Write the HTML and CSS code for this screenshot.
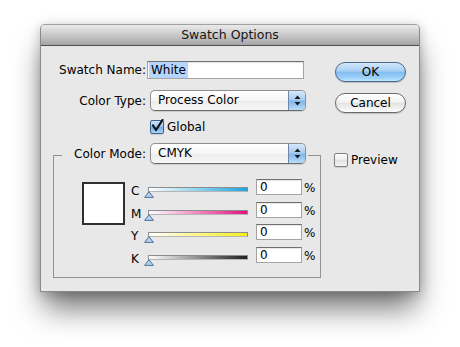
FILE: index.html
```html
<!DOCTYPE html>
<html>
<head>
<meta charset="utf-8">
<link rel="stylesheet" href="styles.css">
</head>
<body>
<div class="stage">
  <div class="win">
    <div class="titlebar">Swatch Options</div>
    <div class="content">
      <div class="main">
        <div class="row r-name">
          <span class="lbl">Swatch Name:</span>
          <div class="textfield"><span class="sel">White</span></div>
        </div>
        <div class="row r-type">
          <span class="lbl">Color Type:</span>
          <div class="popup">
            <span class="val">Process Color</span>
            <span class="arr"><svg width="7" height="11" viewBox="0 0 7 11"><polygon points="3.5,0.5 6.5,4 0.5,4" fill="#1a1a1a"/><polygon points="0.5,7 6.5,7 3.5,10.5" fill="#1a1a1a"/></svg></span>
          </div>
        </div>
        <div class="row r-global">
          <span class="lbl"></span>
          <span class="check on"><svg width="14" height="14" viewBox="0 0 14 14"><path d="M3 6.5 L6 11 L12.5 1" fill="none" stroke="#111" stroke-width="2.2" stroke-linecap="round" stroke-linejoin="round"/></svg></span>
          <span class="cklabel">Global</span>
        </div>
        <div class="group">
          <div class="legend">
            <span class="lbl lg">Color Mode:</span>
            <div class="popup">
              <span class="val">CMYK</span>
              <span class="arr"><svg width="7" height="11" viewBox="0 0 7 11"><polygon points="3.5,0.5 6.5,4 0.5,4" fill="#1a1a1a"/><polygon points="0.5,7 6.5,7 3.5,10.5" fill="#1a1a1a"/></svg></span>
            </div>
          </div>
          <div class="gbody">
            <div class="swatch"></div>
            <div class="sliders">
              <span class="ch">C</span>
              <div class="slot"><div class="track t-c"><svg class="thumb" width="10" height="7" viewBox="0 0 10 7"><polygon points="5,0.7 9.4,6.4 0.6,6.4" fill="#b4cfea" stroke="#4f729c" stroke-width="1"/></svg></div></div>
              <div class="num">0</div><span class="pct">%</span>

              <span class="ch">M</span>
              <div class="slot"><div class="track t-m"><svg class="thumb" width="10" height="7" viewBox="0 0 10 7"><polygon points="5,0.7 9.4,6.4 0.6,6.4" fill="#b4cfea" stroke="#4f729c" stroke-width="1"/></svg></div></div>
              <div class="num">0</div><span class="pct">%</span>

              <span class="ch">Y</span>
              <div class="slot"><div class="track t-y"><svg class="thumb" width="10" height="7" viewBox="0 0 10 7"><polygon points="5,0.7 9.4,6.4 0.6,6.4" fill="#b4cfea" stroke="#4f729c" stroke-width="1"/></svg></div></div>
              <div class="num">0</div><span class="pct">%</span>

              <span class="ch">K</span>
              <div class="slot"><div class="track t-k"><svg class="thumb" width="10" height="7" viewBox="0 0 10 7"><polygon points="5,0.7 9.4,6.4 0.6,6.4" fill="#b4cfea" stroke="#4f729c" stroke-width="1"/></svg></div></div>
              <div class="num">0</div><span class="pct">%</span>
            </div>
          </div>
        </div>
      </div>
      <div class="side">
        <div class="btn ok">OK</div>
        <div class="btn cancel">Cancel</div>
        <div class="row preview">
          <span class="check"></span>
          <span class="cklabel">Preview</span>
        </div>
      </div>
    </div>
  </div>
</div>
</body>
</html>
```

FILE: styles.css
```css
* { box-sizing: border-box; }

html, body {
  height: 100%;
}

body {
  margin: 0;
  min-height: 347px;
  background: #ffffff;
  font-family: "DejaVu Sans", "Liberation Sans", sans-serif;
  font-size: 12px;
  color: #000;
}

.stage {
  padding: 24px 0 0 40px;
  min-height: 347px;
}

.win {
  width: 380px;
  height: 268px;
  border: 1px solid #8a8a8a;
  border-top-color: #a0a0a0;
  border-radius: 5px 5px 0 0;
  background: #e8e8e8;
  box-shadow: 0 20px 30px -4px rgba(0, 0, 0, 0.55), 0 2px 12px rgba(0, 0, 0, 0.22);
  display: flex;
  flex-direction: column;
}

.titlebar {
  height: 21px;
  flex: none;
  border-bottom: 1px solid #4e4e4e;
  border-radius: 4px 4px 0 0;
  background: linear-gradient(#ebebeb, #c9c9c9 50%, #a5a5a5);
  text-align: center;
  font-size: 12.5px;
  line-height: 20px;
  color: #161616;
}

.content {
  flex: 1;
  min-height: 0;
  display: flex;
  gap: 14px;
  padding: 0 13px 0 12px;
}

.main {
  width: 268px;
  display: flex;
  flex-direction: column;
}

.side {
  width: 71px;
  display: flex;
  flex-direction: column;
}

.row {
  display: flex;
  align-items: center;
}

.lbl {
  width: 93px;
  flex: none;
  text-align: right;
}

.r-name {
  margin-top: 15px;
  height: 18px;
}

.textfield {
  margin-left: 1px;
  width: 157px;
  height: 18px;
  background: #fff;
  border: 1px solid #a4a4a4;
  border-top-color: #6f6f6f;
  box-shadow: inset 0 1px 1px rgba(0, 0, 0, 0.12);
  padding: 0 1px;
  display: flex;
}

.sel {
  background: #b5d5fd;
  padding: 0 2px;
  line-height: 16px;
}

.r-type {
  margin-top: 11px;
  height: 21px;
}

.popup {
  margin-left: 4px;
  width: 156px;
  height: 21px;
  flex: none;
  display: flex;
  border: 1px solid #8e8e8e;
  border-bottom-color: #6a6a6a;
  border-radius: 5px;
  overflow: hidden;
  background: linear-gradient(#ffffff, #f6f6f6 50%, #ececec 52%, #f7f7f7);
  box-shadow: 0 1px 1px rgba(0, 0, 0, 0.12);
}

.popup .val {
  flex: 1;
  padding-left: 7px;
  line-height: 19px;
}

.popup .arr {
  width: 17px;
  border-left: 1px solid #6f86a8;
  background: linear-gradient(#d7e8fa, #a7cbf0 48%, #80b6ea 52%, #b9dcf8);
  display: flex;
  align-items: center;
  justify-content: center;
}

.r-global {
  margin-top: 9px;
  height: 14px;
}

.check {
  width: 14px;
  height: 14px;
  flex: none;
  margin-left: 4px;
  border: 1px solid #7f7f7f;
  border-radius: 2px;
  background: linear-gradient(#fdfdfd, #ececec 50%, #e0e0e0 52%, #f5f5f5);
  box-shadow: 0 1px 1px rgba(0, 0, 0, 0.12);
}

.check.on {
  border-color: #3f5f8c;
  background: linear-gradient(#cfe3f8, #9cc6ee 50%, #73aeea 52%, #acd6f7);
}

.check svg {
  display: block;
  margin: -2px 0 0 -1px;
}

.cklabel {
  margin-left: 3px;
}

.group {
  margin-top: 21px;
  display: flex;
  flex-direction: column;
  align-items: flex-start;
  border: 1px solid #939393;
  padding-bottom: 14px;
}

.legend {
  display: flex;
  align-items: center;
  margin: -13px 0 0 8px;
  padding-right: 2px;
  background: #e8e8e8;
}

.lbl.lg {
  width: 84px;
}

.gbody {
  display: flex;
  align-items: flex-start;
  margin-top: 15px;
  padding-left: 28px;
}

.swatch {
  width: 43px;
  height: 43px;
  margin-top: 3px;
  background: #fff;
  border: 2px solid #303030;
}

.sliders {
  margin-left: 6px;
  display: grid;
  grid-template-columns: 14px 111px 46px auto;
  grid-auto-rows: 16px;
  row-gap: 6.67px;
}

.ch {
  line-height: 14px;
  padding-top: 5px;
  height: 16px;
}

.slot {
  padding: 8px 0 0 3px;
}

.track {
  position: relative;
  width: 100px;
  height: 5px;
  border: 1px solid #8d8d8d;
  border-bottom-color: #b5b5b5;
}

.t-c { background: linear-gradient(90deg, #ffffff, #1ea4dc); }
.t-m { background: linear-gradient(90deg, #ffffff, #e3117f); }
.t-y { background: linear-gradient(90deg, #ffffff, #f6ee1a); }
.t-k { background: linear-gradient(90deg, #ffffff, #1e1e1e); }

.thumb {
  position: absolute;
  left: -5px;
  top: 3px;
  display: block;
}

.num {
  height: 16px;
  background: #fff;
  border: 1px solid #a4a4a4;
  border-top-color: #6f6f6f;
  box-shadow: inset 0 1px 1px rgba(0, 0, 0, 0.1);
  padding-left: 3px;
  line-height: 14px;
}

.pct {
  margin-left: 2px;
  line-height: 16px;
  padding-top: 1px;
}

.btn {
  height: 20px;
  border-radius: 10px;
  border: 1px solid #6b6b6b;
  text-align: center;
  line-height: 18px;
  box-shadow: 0 1px 1px rgba(0, 0, 0, 0.18);
}

.ok {
  margin-top: 16px;
  border-color: #4a6790;
  background: linear-gradient(#d3e7fb, #a7cff3 45%, #84bdf0 52%, #9fd3fb 85%, #c4e8ff);
}

.cancel {
  margin-top: 11px;
  background: linear-gradient(#ffffff, #f3f3f3 45%, #e3e3e3 52%, #f4f4f4 85%, #ffffff);
}

.preview {
  margin-top: 40px;
  margin-left: -5px;
  height: 14px;
}
```
